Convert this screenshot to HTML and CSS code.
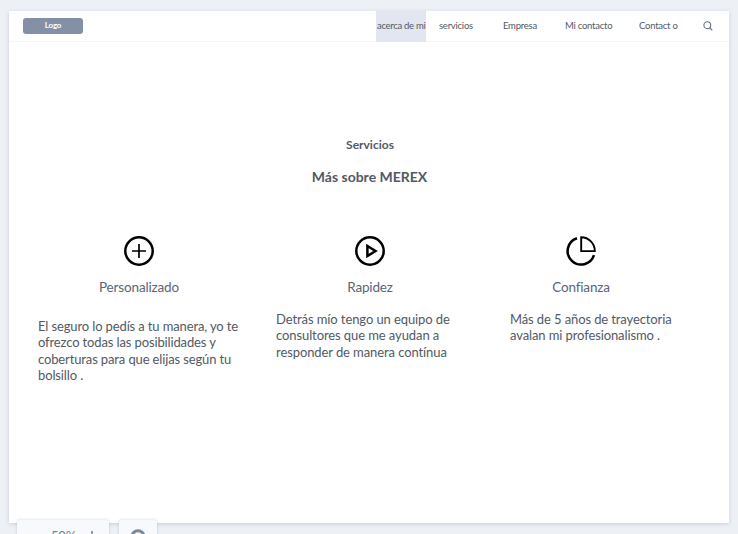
FILE: index.html
```html
<!DOCTYPE html>
<html lang="es">
<head>
<meta charset="utf-8">
<title>MEREX</title>
<link rel="stylesheet" href="styles.css">
</head>
<body>
<main class="page">
  <header class="navbar">
    <div class="logo">Logo</div>
    <nav class="menu">
      <a class="link active"><span>acerca de mi</span></a>
      <a class="link servicios">servicios</a>
      <a class="link empresa">Empresa</a>
      <a class="link mi-contacto">Mi contacto</a>
      <a class="link contacto">Contact o</a>
      <svg class="search" viewBox="0 0 10 10"><circle cx="4.3" cy="4.2" r="3.4"/><path d="M6.8 6.8 9.3 9.4"/></svg>
    </nav>
  </header>
  <section class="services">
    <h2 class="eyebrow">Servicios</h2>
    <h1 class="title">Más sobre MEREX</h1>
    <div class="columns">
      <article class="card first">
        <div class="head">
          <svg class="icon" viewBox="0 0 30 30"><circle cx="15" cy="15" r="13.7"/><path class="thin" d="M15 8v14M8 15h14"/></svg>
          <h3>Personalizado</h3>
        </div>
        <p>El seguro lo pedís a tu manera, yo te<br>ofrezco todas las posibilidades y<br>coberturas para que elijas según tu<br>bolsillo .</p>
      </article>
      <article class="card second">
        <div class="head">
          <svg class="icon" viewBox="0 0 30 30"><circle cx="15" cy="15" r="13.7"/><path d="M12.4 9.9v10.2L20.5 15z"/></svg>
          <h3>Rapidez</h3>
        </div>
        <p>Detrás mío tengo un equipo de<br>consultores que me ayudan a<br>responder de manera contínua</p>
      </article>
      <article class="card third">
        <div class="head">
          <svg class="icon" viewBox="0 0 30 30"><path d="M11 2.2A13.5 13.5 0 1 0 28 19.2"/><path class="slice" d="M15.2 1.2v13.9h13.6A13.7 13.7 0 0 0 15.2 1.2z"/></svg>
          <h3>Confianza</h3>
        </div>
        <p>Más de 5 años de trayectoria<br>avalan mi profesionalismo .</p>
      </article>
    </div>
  </section>
</main>
<div class="toolbar">
  <div class="zoom"><span>50%</span><svg class="plus" viewBox="0 0 10 10"><path d="M5 0v10M0 5h10"/></svg></div>
  <div class="help"><svg viewBox="0 0 16 16"><circle cx="8" cy="8" r="6.2"/></svg></div>
</div>
</body>
</html>
```
FILE: styles.css
```css
* { box-sizing: border-box; }
body {
  margin: 0;
  height: 534px;
  padding: 11px 9px 0;
  overflow: hidden;
  background: #edf1f6;
  color: #525965;
  font-family: Lato, sans-serif;
}
h1, h2, h3, p { margin: 0; }
.page {
  width: 720px;
  height: 512px;
  background: #fff;
  box-shadow: 0 1px 4px rgba(120, 135, 160, .3);
}
.navbar {
  display: flex;
  height: 31px;
  padding-left: 14px;
  border-bottom: 1px solid #f4f5f7;
}
.logo {
  width: 60px;
  height: 16px;
  margin-top: 7px;
  border-radius: 3px;
  background: #8490a6;
  color: #fff;
  font-size: 8px;
  font-weight: 700;
  line-height: 15px;
  letter-spacing: -.2px;
  text-align: center;
}
.menu {
  display: grid;
  grid-template-columns: 63px 64px 62px 74px 64px 11px;
  margin-left: 293px;
  height: 30px;
  font-size: 9.5px;
  letter-spacing: -.24px;
  line-height: 30px;
  white-space: nowrap;
}
.active {
  width: 50px;
  height: 31px;
  padding-left: 1px;
  background: #e2e6f0;
  letter-spacing: -.3px;
}
.search { width: 10px; height: 10px; margin-top: 10px; fill: none; stroke: #687080; stroke-width: 1.1; }
.services { padding-top: 94px; }
.eyebrow { font-size: 12px; line-height: 18px; font-weight: 700; text-align: center; padding-left: 2px; }
.title { margin-top: 13px; padding-left: 1px; font-size: 14px; line-height: 20px; font-weight: 700; text-align: center; }
.columns { display: grid; grid-template-columns: 238px 234px 191px; margin: 49px 0 0 29px; }
.head { display: flex; flex-direction: column; align-items: center; height: 75px; }
.first .head { width: 202px; height: 82px; }
.second .head { width: 188px; }
.third .head { width: 142px; }
.icon { width: 30px; height: 30px; fill: none; stroke: #000; stroke-width: 2.5; }
.icon .thin { stroke-width: 1.7; }
.icon .slice { stroke-width: 1.9; }
h3 { margin-top: 12px; font-size: 13.5px; line-height: 18px; font-weight: 400; letter-spacing: -.15px; color: #5c6575; }
.card p { font-size: 13px; line-height: 16.4px; letter-spacing: -.11px; white-space: nowrap; }
.first p { letter-spacing: -.13px; }
.second p { letter-spacing: -.09px; }
.toolbar { position: absolute; left: 14px; top: 517px; padding: 3px 3px 0; display: flex; gap: 10px; height: 17px; overflow: hidden; color: #737f92; }
.zoom, .help { height: 34px; border-radius: 3px 3px 0 0; background: #f7f9fc; box-shadow: 0 0 3px rgba(110, 125, 150, .35); }
.zoom { width: 92px; display: flex; padding: 8px 0 0 34px; font-size: 13px; line-height: 16px; letter-spacing: -.2px; gap: 11px; }
.plus { width: 10px; height: 10px; margin-top: 3px; fill: none; stroke: #737f92; stroke-width: 1.5; }
.help { width: 38px; padding: 9px 0 0 11px; }
.help svg { width: 16px; height: 16px; display: block; fill: none; stroke: #7c8799; stroke-width: 3; }
```
